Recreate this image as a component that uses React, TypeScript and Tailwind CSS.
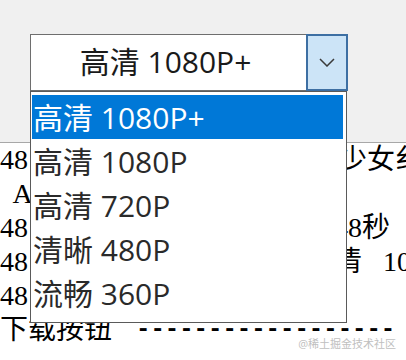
import { useState } from "react";

const options = ["高清 1080P+", "高清 1080P", "高清 720P", "清晰 480P", "流畅 360P"];

const uiFont = { fontFamily: '"Open Sans", "Noto Sans CJK SC", sans-serif' };
const consoleFont = { fontFamily: '"Liberation Serif", "Noto Sans CJK SC", serif' };

/*~~~~~~~~~~ Console lines behind the window ~~~~~~~~~~*/
const ConsoleLine = ({ left, right, rightOffset = 334 }: { left: string; right?: string; rightOffset?: number }) => (
  <div className="flex h-[34px] items-center whitespace-pre">
    <span className="shrink-0" style={{ width: rightOffset }}>
      {left}
    </span>
    {right && <span>{right}</span>}
  </div>
);

export default function App() {
  const [selected, setSelected] = useState(0);

  return (
    <div className="relative h-[360px] w-[406px] overflow-hidden bg-white text-[#111]">
      {/* Window panel */}
      <div className="h-[143px] border-b border-[#a8a8a8] bg-[#f0f0f0] pl-[30px] pt-[34px]">
        <div className="flex h-[57px] w-[318px] border border-[#6e6e6e] bg-white">
          <div
            className="flex flex-1 items-center justify-center pb-[2px] pr-[6px] text-[30px] text-[#1a1a1a]"
            style={uiFont}
          >
            {options[selected]}
          </div>
          <div className="-my-px -mr-px flex w-[42px] items-center justify-center border-2 border-[#3d6fa3] bg-[#cce4f7]">
            <svg width="16" height="9" viewBox="0 0 16 9" fill="none">
              <polyline points="1,1 8,8 15,1" stroke="#3a3a3a" strokeWidth="1.5" />
            </svg>
          </div>
        </div>
      </div>

      {/* Console text */}
      <div className="text-[28px] leading-[34px] text-black" style={consoleFont}>
        <ConsoleLine left="48" right="少女纟" rightOffset={339} />
        <ConsoleLine left="  A" />
        <ConsoleLine left="48" right="48秒" rightOffset={334} />
        <ConsoleLine left="48" right="清   10" rightOffset={334} />
        <ConsoleLine left="48" />
        <div className="flex h-[34px] items-center whitespace-pre">
          <span className="w-[136px] shrink-0">下载按钮</span>
          <span className="text-[24px] font-bold" style={{ fontFamily: '"Liberation Mono", monospace' }}>
            ------------------
          </span>
        </div>
      </div>

      {/* Dropdown list */}
      <div
        className="absolute left-[30px] top-[91px] h-[232px] w-[317px] border border-[#5a5a5a] bg-white pl-px pr-[3px] pt-[3px]"
        style={uiFont}
      >
        {options.map((opt, i) => (
          <div
            key={opt}
            onClick={() => setSelected(i)}
            className={
              i === selected
                ? "flex h-[44px] items-center bg-[#0078d7] pl-px text-[30px] text-white"
                : "flex h-[44px] items-center pl-px text-[30px] text-[#2a2a2a]"
            }
          >
            {opt}
          </div>
        ))}
      </div>

      {/* Watermark */}
      <div className="absolute bottom-[8px] right-[10px] text-[11px] text-[#c0c0c0]" style={uiFont}>
        @稀土掘金技术社区
      </div>
    </div>
  );
}
